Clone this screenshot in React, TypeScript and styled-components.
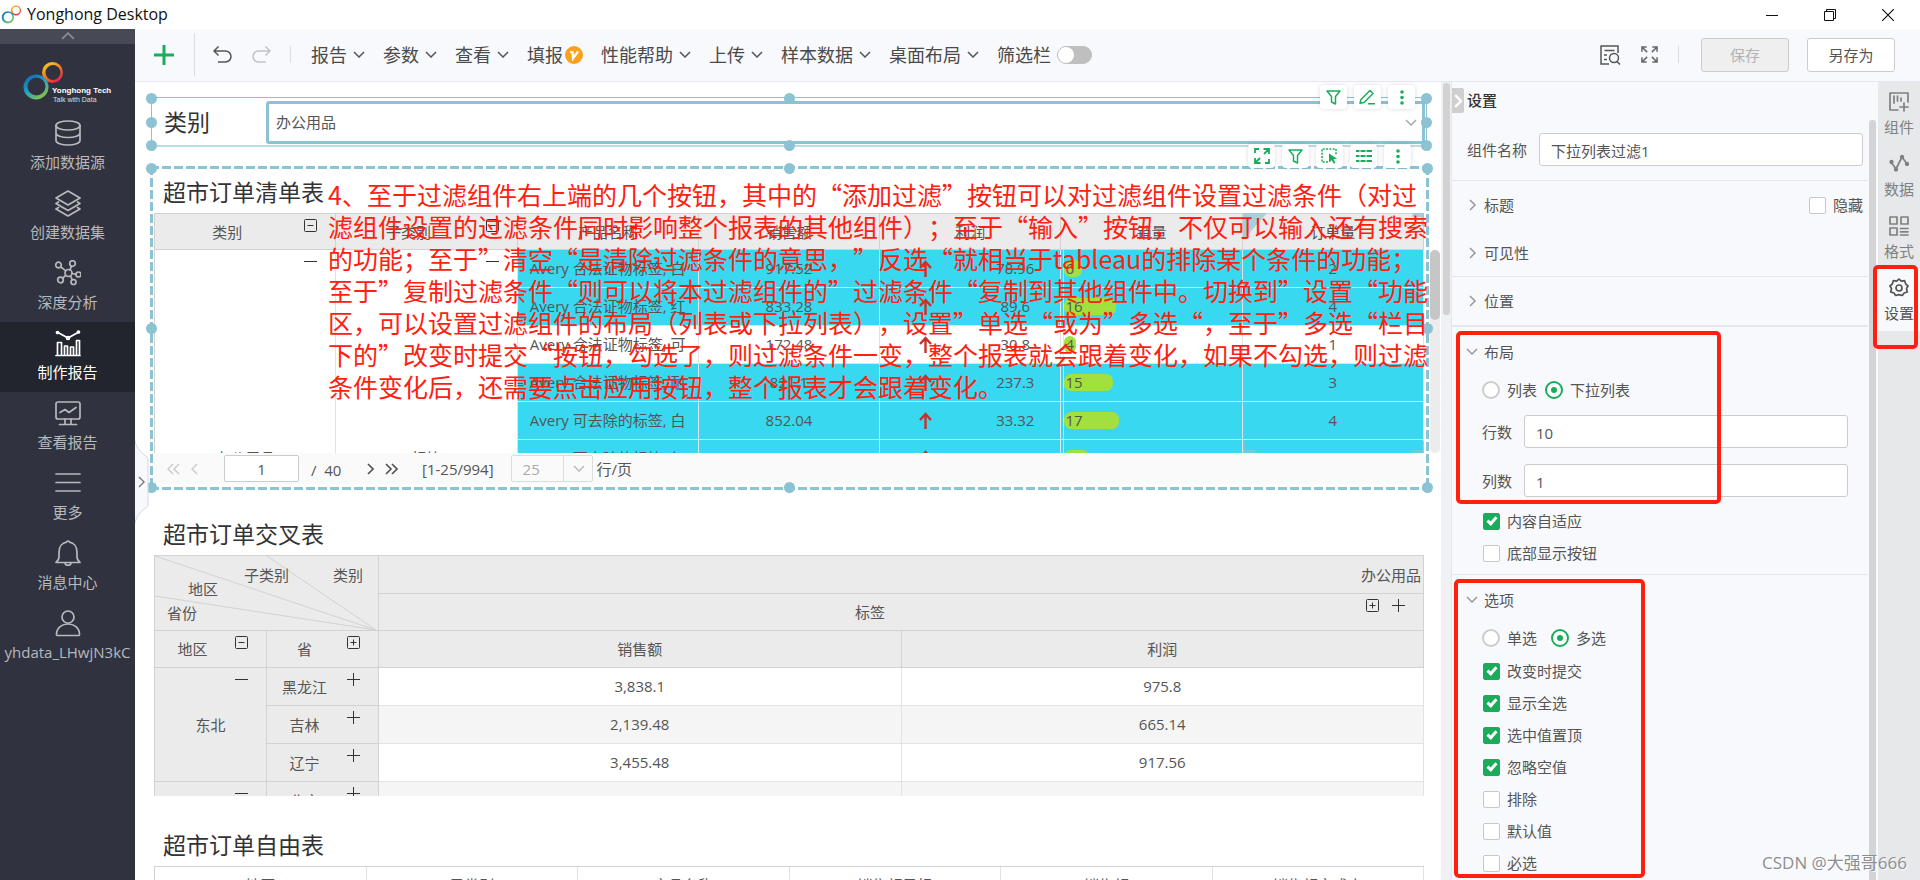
import React from "react";
import styled, { createGlobalStyle, css } from "styled-components";

const teal = "#8bc3d3";
const green = "#19ad5b";
const red = "#ff2010";

const GlobalStyle = createGlobalStyle`
  *, *::before, *::after { box-sizing: border-box; }
  body { margin: 0; }
  body, button, input, select {
    font-family: "Open Sans", "Noto Sans CJK SC", sans-serif;
    font-size: 15px;
    color: #555;
  }
  button { border: 0; background: none; padding: 0; cursor: pointer; }
`;

/* ---------- frame ---------- */

const Window = styled.div`
  display: flex;
  flex-direction: column;
  height: 100vh;
  overflow: hidden;
  background: #fff;
  position: relative;
`;

const TitleBar = styled.header`
  flex: none;
  display: flex;
  align-items: center;
  height: 29px;
  padding: 0 26px 0 1px;
  color: #111;
  h1 {
    flex: 1;
    margin: 0 0 0 5px;
    font-size: 16px;
    line-height: 29px;
    font-weight: 400;
  }
`;

const WindowButtons = styled.div`
  display: flex;
  gap: 46px;
  button { display: flex; }
`;

const Frame = styled.div`
  flex: 1;
  min-height: 0;
  display: flex;
`;

const Column = styled.div`
  flex: 1;
  min-width: 0;
  display: flex;
  flex-direction: column;
`;

const Row = styled.div`
  flex: 1;
  min-height: 0;
  display: flex;
`;

/* ---------- navigation ---------- */

const Sidebar = styled.nav`
  flex: none;
  width: 135px;
  background: #30333f;
  display: flex;
  flex-direction: column;
`;

const CollapseStrip = styled.button`
  height: 15px;
  background: #474954;
  display: flex;
  align-items: center;
  justify-content: center;
`;

const Logo = styled.div`
  height: 68px;
`;

const NavItem = styled.button<{ $active?: boolean }>`
  height: 70px;
  display: flex;
  flex-direction: column;
  align-items: center;
  padding-top: 8px;
  gap: 4px;
  line-height: 22px;
  color: ${(p) => (p.$active ? "#fff" : "#b8b9bd")};
  background: ${(p) => (p.$active ? "#22242e" : "none")};
`;

/* ---------- toolbar ---------- */

const Toolbar = styled.div`
  flex: none;
  height: 53px;
  padding: 0 25px 1px 19px;
  display: flex;
  align-items: center;
  background: #f8f9fc;
  border-bottom: 1px solid #e4e7ed;
`;

const Divider = styled.span<{ $tall?: boolean }>`
  width: 1px;
  height: ${(p) => (p.$tall ? 43 : 17)}px;
  background: #d9dce2;
`;

const History = styled.div`
  display: flex;
  gap: 20px;
  padding: 0 19px 0 18px;
  button { display: flex; }
`;

const Menus = styled.div`
  flex: 1;
  display: flex;
  align-items: center;
  gap: 18px;
  padding-left: 20px;
`;

const Menu = styled.button`
  display: flex;
  align-items: center;
  gap: 6px;
  font-size: 18px;
  line-height: 26px;
  color: #4a4a4a;
`;

const VipBadge = styled.span`
  display: flex;
  margin-left: -4px;
`;

const SwitchLabel = styled.label`
  display: flex;
  align-items: center;
  gap: 6px;
  font-size: 18px;
  line-height: 26px;
  color: #4a4a4a;
  input {
    appearance: none;
    margin: 0;
    width: 35px;
    height: 18px;
    border-radius: 9px;
    background: #bfbfbf;
    border: 1px solid #bfbfbf;
  }
  input::before {
    content: "";
    display: block;
    width: 16px;
    height: 16px;
    border-radius: 50%;
    background: #fff;
  }
`;

const ToolActions = styled.div`
  display: flex;
  align-items: center;
  gap: 20px;
  button { display: flex; }
`;

const SaveButtons = styled.div`
  display: flex;
  gap: 18px;
  margin-left: 2px;
`;

const PushButton = styled.button`
  && {
    width: 88px;
    height: 34px;
    justify-content: center;
    align-items: center;
    border: 1px solid #ccc;
    border-radius: 3px;
    background: #fff;
  }
  &&:disabled {
    background: #efefef;
    color: #b3b3b3;
  }
`;

/* ---------- canvas ---------- */

const Canvas = styled.main`
  flex: 1;
  min-width: 0;
  position: relative;
  overflow: hidden;
  padding: 15px 12px 0 15px;
`;

const Track = styled.div`
  flex: none;
  width: 10px;
  background: #f0f1f4;
  padding: 1px 1px 0 2px;
  &::before {
    content: "";
    display: block;
    height: 232px;
    border-radius: 3px;
    background: #d2d2d2;
  }
`;

const DrawerHandle = styled.button`
  position: absolute;
  left: 0;
  top: 358px;
  display: flex;
  z-index: 1;
`;

const FilterBox = styled.section`
  position: relative;
  margin: 0 2px 0 1px;
  height: 50px;
  display: flex;
  align-items: center;
  border: 1px solid ${teal};
  border-bottom: 2px solid #b9dde6;
  padding: 1px 1px 0 12px;
`;

const FilterLabel = styled.label`
  width: 102px;
  font-size: 23px;
  line-height: 42px;
  color: #333;
`;

const SelectWrap = styled.div`
  flex: 1;
  position: relative;
  display: flex;
  select {
    appearance: none;
    width: 100%;
    height: 43px;
    padding: 0 7px;
    border: 3px solid ${teal};
    border-radius: 3px;
    background: #fff;
  }
  svg {
    position: absolute;
    right: 8px;
    top: 18px;
  }
`;

const dash = (deg: number) =>
  `repeating-linear-gradient(${deg}deg, ${teal} 0 9px, transparent 9px 12px)`;

const ListBox = styled.section`
  position: relative;
  margin-top: 19px;
  padding: 5px 5px 6px 4px;
  background:
    ${dash(90)} 0 0 / 100% 3px no-repeat,
    ${dash(90)} 0 100% / 100% 3px no-repeat,
    ${dash(180)} 0 0 / 3px 100% no-repeat,
    ${dash(180)} 100% 0 / 3px 100% no-repeat;
`;

const DotFrame = styled.div<{ $inset: string }>`
  position: absolute;
  inset: ${(p) => p.$inset};
  pointer-events: none;
`;

const Dot = styled.i<{ $x: number; $y: number }>`
  position: absolute;
  left: ${(p) => p.$x}%;
  top: ${(p) => p.$y}%;
  width: 11px;
  height: 11px;
  margin: -5px;
  border-radius: 50%;
  background: ${teal};
`;

const FloatTools = styled.div<{ $right: number; $top: number }>`
  position: absolute;
  right: ${(p) => p.$right}px;
  top: ${(p) => p.$top}px;
  display: flex;
  gap: 7px;
  z-index: 2;
  button {
    width: 27px;
    height: 24px;
    display: flex;
    align-items: center;
    justify-content: center;
    border-radius: 4px;
    background: #fff;
    box-shadow: 0 0 5px rgba(0, 0, 0, 0.14);
  }
`;

const Heading = styled.h2`
  margin: 0;
  padding-left: 9px;
  font-size: 23px;
  line-height: 42px;
  font-weight: 400;
  color: #333;
`;

const Section = styled.section<{ $gap: number }>`
  margin: ${(p) => p.$gap}px 5px 0 4px;
`;

const Clip = styled.div<{ $height: number }>`
  position: relative;
  height: ${(p) => p.$height}px;
  overflow: hidden;
`;

const Grid = styled.table`
  width: 100%;
  table-layout: fixed;
  border-collapse: separate;
  border-spacing: 0;
  border-top: 1px solid #d2d2d2;
  border-left: 1px solid #d2d2d2;
  text-align: center;
`;

const Head = styled.th<{ $mark?: boolean; $marks?: boolean; $h?: number; $align?: string }>`
  position: relative;
  height: ${(p) => p.$h ?? 37}px;
  padding: 0 2px;
  font-weight: 400;
  line-height: 20px;
  background: #ebebeb;
  border-right: 1px solid #d2d2d2;
  border-bottom: 1px solid #d2d2d2;
  text-align: ${(p) => p.$align ?? "center"};
  ${(p) => p.$mark && css`padding-right: 38px;`}
  ${(p) => p.$marks && css`padding-right: 64px;`}
`;

const Cell = styled.td<{ $bg?: string; $low?: boolean }>`
  position: relative;
  height: 38px;
  padding: 0;
  line-height: 37px;
  white-space: nowrap;
  background: ${(p) => p.$bg ?? "#fff"};
  border-right: 1px solid #e2e2e2;
  border-bottom: 1px solid #e2e2e2;
  vertical-align: ${(p) => (p.$low ? "bottom" : "middle")};
`;

const Mark = styled.button<{ $right?: number }>`
  position: absolute;
  top: 5px;
  right: ${(p) => p.$right ?? 18}px;
  display: flex;
`;

const Halves = styled.div`
  display: grid;
  grid-template-columns: 1fr 1fr;
  place-items: center;
`;

const Bar = styled.div`
  display: flex;
  align-items: center;
  height: 17px;
  padding-left: 1px;
  border-radius: 7px;
  background: #a2e03f;
`;

const BarCell = styled.div`
  border-left: 1px solid #cfeff4;
  height: 37px;
  display: flex;
  align-items: center;
  margin-left: 2px;
`;

const Selection = styled.div`
  position: absolute;
  top: 0;
  right: 0;
  width: calc(100% / 7);
  height: 100%;
  display: flex;
  pointer-events: none;
  svg { width: 100%; height: 100%; overflow: visible; }
`;

const InnerScroll = styled.div`
  position: absolute;
  right: -11px;
  top: 84px;
  width: 10px;
  height: 203px;
  border-radius: 5px;
  background: #ececec;
  &::before {
    content: "";
    display: block;
    height: 70px;
    border-radius: 5px;
    background: #c6c6c6;
  }
`;

const Pager = styled.div`
  height: 31px;
  display: flex;
  align-items: center;
  padding: 0 13px;
  background: #fafafa;
  > button { display: flex; }
  > input {
    width: 75px;
    height: 27px;
    margin: 0 12px 0 26px;
    border: 1px solid #ccc;
    border-radius: 2px;
    text-align: center;
  }
  > button + button { margin-left: 11px; }
`;

const PageCount = styled.span`
  width: 56px;
  line-height: 20px;
  padding-top: 3px;
`;

const PageRange = styled.span`
  margin: 0 17px 0 24px;
`;

const PageSize = styled.div`
  position: relative;
  display: flex;
  margin-right: 4px;
  select {
    appearance: none;
    width: 82px;
    height: 27px;
    padding: 0 11px;
    border: 1px solid #ddd;
    border-radius: 2px;
    background: linear-gradient(#ddd, #ddd) 51px 0 / 1px 100% no-repeat #fafafa;
    color: #aaa;
    opacity: 1;
  }
  svg {
    position: absolute;
    right: 8px;
    top: 10px;
  }
`;

const Note = styled.p`
  position: absolute;
  left: 178px;
  top: 12px;
  margin: 0;
  font-family: "Noto Sans CJK SC", sans-serif;
  font-size: 25px;
  line-height: 32px;
  white-space: pre;
  text-spacing-trim: space-all;
  color: ${red};
  z-index: 1;
`;

const Corner = styled.th`
  position: relative;
  padding: 0;
  font-weight: 400;
  background: #ebebeb;
  border-right: 1px solid #d2d2d2;
  border-bottom: 1px solid #d2d2d2;
  svg {
    position: absolute;
    inset: 0;
    width: 100%;
    height: 100%;
  }
`;

const CornerLabel = styled.span<{ $x: number; $y: number }>`
  position: absolute;
  left: ${(p) => p.$x}px;
  top: ${(p) => p.$y}px;
  line-height: 20px;
`;

/* ---------- settings panel ---------- */

const Panel = styled.aside`
  flex: none;
  width: 417px;
  position: relative;
  background: #f8f9fc;
  border-left: 1px solid #e4e7ed;
  overflow: hidden;
`;

const PanelToggle = styled.button`
  position: absolute;
  left: 0;
  top: 6px;
  width: 12px;
  height: 25px;
  display: flex;
  align-items: center;
  justify-content: center;
  border-radius: 0 2px 2px 0;
  background: #cfcfcf;
`;

const PanelTitle = styled.h2`
  margin: 0;
  padding: 8px 0 0 15px;
  font-size: 15px;
  line-height: 20px;
  font-weight: 500;
  color: #333;
`;

const Field = styled.label<{ $inset?: boolean }>`
  display: flex;
  align-items: center;
  gap: 12px;
  padding: ${(p) => (p.$inset ? "0 20px 0 30px" : "0 5px 0 15px")};
  height: 33px;
  line-height: 20px;
  input {
    flex: 1;
    min-width: 0;
    height: 33px;
    padding: 2px 11px 0;
    border: 1px solid #ccc;
    border-radius: 3px;
    background: #fff;
  }
`;

const NameField = styled.div`
  padding: 23px 0 14px;
  border-bottom: 1px solid #e4e7ed;
`;

const Fold = styled.div<{ $line?: number }>`
  height: ${(p) => (p.$line === 2 ? 50 : 48)}px;
  display: flex;
  align-items: center;
  justify-content: space-between;
  padding: 0 5px 0 16px;
  border-bottom: ${(p) => p.$line ?? 0}px solid #e4e7ed;
  > button {
    display: flex;
    align-items: center;
    gap: 7px;
    line-height: 22px;
  }
  > button svg { width: 9px; }
`;

const Group = styled.section<{ $last?: boolean }>`
  position: relative;
  padding-bottom: ${(p) => (p.$last ? 0 : 11)}px;
  border-bottom: ${(p) => (p.$last ? 0 : 1)}px solid #e4e7ed;
`;

const GroupTitle = styled.button`
  display: flex;
  align-items: center;
  gap: 6px;
  height: 48px;
  padding-left: 14px;
`;

const Radios = styled.div<{ $gap: number }>`
  display: flex;
  align-items: center;
  gap: ${(p) => p.$gap}px;
  height: 30px;
  padding-left: 30px;
`;

const Choice = styled.label`
  display: flex;
  align-items: center;
  gap: 7px;
  line-height: 20px;
  input {
    appearance: none;
    margin: 0;
    width: 17px;
    height: 17px;
    position: relative;
    border: 1px solid #c8c8c8;
    border-radius: 2px;
    background: #fff;
  }
  input[type="radio"] {
    width: 18px;
    height: 18px;
    border-width: 2px;
    border-color: #ccc;
    border-radius: 50%;
  }
  input[type="radio"]:checked { border-color: ${green}; }
  input[type="radio"]:checked::after {
    content: "";
    position: absolute;
    inset: 4px;
    border-radius: 50%;
    background: ${green};
  }
  input[type="checkbox"]:checked {
    background: ${green};
    border-color: ${green};
  }
  input[type="checkbox"]:checked::after {
    content: "";
    position: absolute;
    left: 5px;
    top: 1px;
    width: 6px;
    height: 10px;
    border: solid #fff;
    border-width: 0 3px 3px 0;
    transform: rotate(42deg);
  }
`;

const Checks = styled.div<{ $top?: number }>`
  display: flex;
  flex-direction: column;
  gap: 12px;
  padding: ${(p) => p.$top ?? 0}px 0 0 31px;
`;

const Fields = styled.div`
  display: flex;
  flex-direction: column;
  gap: 16px;
  padding: 10px 0 14px;
`;

const RedBox = styled.div<{ $box: [number, number, number, number] }>`
  position: absolute;
  left: ${(p) => p.$box[0]}px;
  top: ${(p) => p.$box[1]}px;
  width: ${(p) => p.$box[2]}px;
  height: ${(p) => p.$box[3]}px;
  border: 4px solid ${red};
  border-radius: 5px;
  pointer-events: none;
  z-index: 3;
`;

const PanelScroll = styled.div`
  flex: none;
  width: 10px;
  background: #f8f9fc;
  padding: 38px 2px 0 1px;
  display: flex;
  &::before {
    content: "";
    flex: 1;
    border-radius: 3px 3px 0 0;
    background: #d4d4d4;
  }
`;

const Rail = styled.nav`
  flex: none;
  width: 42px;
  position: relative;
  padding-top: 1px;
  background: #e7e8ea;
`;

const RailItem = styled.button<{ $active?: boolean }>`
  width: 42px;
  height: 62px;
  display: flex;
  flex-direction: column;
  align-items: center;
  justify-content: flex-end;
  padding-bottom: 8px;
  gap: 5px;
  line-height: 20px;
  color: ${(p) => (p.$active ? "#555" : "#808080")};
  background: ${(p) => (p.$active ? "#f8f9fc" : "none")};
`;

const Watermark = styled.div`
  position: absolute;
  right: 13px;
  bottom: 4px;
  font-family: "Open Sans", "Noto Sans CJK SC", sans-serif;
  font-size: 17px;
  line-height: 26px;
  color: #8d8e90;
  text-shadow: 1px 1px 1px #fff;
  z-index: 4;
`;

/* ---------- icons ---------- */

type Dir = "down" | "up" | "left" | "right";
const turns: Record<Dir, string> = {
  down: "M1 1l5 5 5-5",
  up: "M1 6l5-5 5 5",
  left: "M6 1L1 6l5 5",
  right: "M1 1l5 5-5 5",
};

function Chevron({ dir = "down", size = 12, color = "#555", w = 1.5, twice = false }: {
  dir?: Dir; size?: number; color?: string; w?: number; twice?: boolean;
}) {
  const flat = dir === "down" || dir === "up";
  const across = twice ? 13 : 7;
  const k = size / 12;
  return (
    <svg width={(flat ? 12 : across) * k} height={(flat ? 7 : 12) * k}
      viewBox={flat ? "0 0 12 7" : `0 0 ${across} 12`} fill="none" stroke={color} strokeWidth={w}>
      <path d={turns[dir]} />
      {twice && <path d={turns[dir]} transform="translate(6 0)" />}
    </svg>
  );
}

function RingShapes({ id }: { id: string }) {
  return (
    <>
      <defs>
        <linearGradient id={`${id}a`} x1="0.2" y1="0" x2="0.8" y2="1">
          <stop offset="0" stopColor="#f6d21c" />
          <stop offset="0.45" stopColor="#f58220" />
          <stop offset="1" stopColor="#e5124f" />
        </linearGradient>
        <linearGradient id={`${id}b`} x1="0.1" y1="0.1" x2="0.7" y2="1">
          <stop offset="0" stopColor="#1767b0" />
          <stop offset="0.45" stopColor="#1c9fc9" />
          <stop offset="1" stopColor="#8cc63f" />
        </linearGradient>
      </defs>
      <path fillRule="evenodd" fill={`url(#${id}a)`}
        d="M52.500 18a10.500 10.500 0 1 1 0 21a10.500 10.500 0 1 1 0-21zM53 21a7.500 7.500 0 1 0 0 15a7.500 7.500 0 1 0 0-15z" />
      <path fillRule="evenodd" fill={`url(#${id}b)`}
        d="M36 30.500a12.500 12.500 0 1 1 0 25a12.500 12.500 0 1 1 0-25zM36.500 33.500a9 9 0 1 0 0 18a9 9 0 1 0 0-18z" />
    </>
  );
}

const line = { fill: "none", stroke: "currentColor", strokeWidth: 1.7, strokeLinejoin: "round", strokeLinecap: "round" } as const;

const navIcons: Record<string, React.ReactNode> = {
  db: (<><ellipse cx="13" cy="5.500" rx="12" ry="4.500" /><path d="M1 5.500v15c0 2.500 5.400 4.500 12 4.500s12-2 12-4.500v-15M1 13c0 2.500 5.400 4.500 12 4.500S25 15.500 25 13" /></>),
  layers: (<><path d="M13 1l12 7-12 7L1 8z" /><path d="M3.500 12L1 13.500l12 7 12-7-2.500-1.500M3.500 17.500L1 19l12 7 12-7-2.500-1.500" /></>),
  net: (<><circle cx="13.500" cy="13" r="3.500" /><circle cx="3.500" cy="5" r="2.800" /><circle cx="17.500" cy="3.500" r="2.800" /><circle cx="23.500" cy="14.500" r="2.500" /><circle cx="18.500" cy="22" r="2.500" /><circle cx="5.500" cy="20" r="2.800" /><path d="M5.800 6.800l5 4M16.500 6.200l-1.500 3.600M17 13.500l4 .6M15.500 16l1.800 3.800M10.800 15.400l-3.200 2.800" /></>),
  chart: (<><path d="M3 2.500l10 5.500 10-5.500" /><circle cx="2.500" cy="2.500" r="1" /><circle cx="13" cy="8" r="1.500" /><circle cx="23.500" cy="2" r="1" /><path d="M1 25.500h24M2.500 25V12.500h4V25M9.500 25v-9h3v9M15.500 25v-8h3v8M21.500 25V10.500h3V25" /></>),
  monitor: (<><rect x="1" y="2" width="24" height="17" rx="2" /><path d="M5 12.500l5-3 4 3 7-5M10 19v5M16 19v5M4.500 24.500h17" /></>),
  menu: (<path d="M1 4h24M1 12.500h24M1 21h24" />),
  bell: (<><path d="M1 22.500h24c-2-1.500-3-3-3-6V12c0-5-3-9-7.500-9.800C14.300.600 11.700.600 11.500 2.200 7 3 4 7 4 12v4.500c0 3-1 4.500-3 6z" /><path d="M10 23c.5 3 5.500 3 6 0" /></>),
  user: (<><circle cx="13" cy="7" r="6" /><path d="M1.500 24.500c0-14 23-14 23 0 0 .5-.5 1-1 1h-21c-.5 0-1-.5-1-1z" /></>),
};

const nav = [
  ["db", "添加数据源"], ["layers", "创建数据集"], ["net", "深度分析"], ["chart", "制作报告"],
  ["monitor", "查看报告"], ["menu", "更多"], ["bell", "消息中心"], ["user", "yhdata_LHwjN3kC"],
];

const tools: Record<string, React.ReactNode> = {
  expand: (
    <svg width="16" height="16" viewBox="0 0 16 16" fill="none" stroke={green} strokeWidth="1.800">
      <path d="M1 5V1h4M9.500 1H15v5M15 11v4h-4M6.500 15H1v-5M15 1l-5 5M1 15l5-5" />
    </svg>
  ),
  filter: (
    <svg width="15" height="15" viewBox="0 0 15 15" fill="none" stroke={green} strokeWidth="1.500" strokeLinejoin="round">
      <path d="M1 1h13L9.500 6.500v7.500l-4-2V6.500z" />
    </svg>
  ),
  select: (
    <svg width="17" height="16" viewBox="0 0 17 16" fill="none" stroke={green} strokeWidth="1.500">
      <path d="M7 14H1V1h14v6" strokeDasharray="2 1.300" />
      <path d="M8 5.500l8 5-3.500.8 2 3.500-1.700.9-2-3.500L8 14.500z" fill={green} stroke="none" />
    </svg>
  ),
  list: (
    <svg width="16" height="14" viewBox="0 0 16 14" stroke={green} strokeWidth="2.200">
      <path d="M0 2h3.500M4.500 2h5M10.500 2H16M0 7h3.500M4.500 7h5M10.500 7H16M0 12h3.500M4.500 12h5M10.500 12H16" />
    </svg>
  ),
  pen: (
    <svg width="17" height="16" viewBox="0 0 17 16" fill="none" stroke={green} strokeWidth="1.500" strokeLinejoin="round">
      <path d="M2 10.500L11 1.500l3 3-9 9-4 .8zM9 14.800h7" />
    </svg>
  ),
  more: (
    <svg width="4" height="15" viewBox="0 0 4 15" fill={green}>
      <circle cx="2" cy="2" r="1.800" /><circle cx="2" cy="7.500" r="1.800" /><circle cx="2" cy="13" r="1.800" />
    </svg>
  ),
};

const railIcons: Record<string, React.ReactNode> = {
  widget: (<><path d="M19 10V1H1v17h8" /><path d="M5 4v7M8.500 4v5M12 6v3M15 11v8M11 15h8" /></>),
  data: (<><path d="M2 8l5 7 6-12 5 7" /><circle cx="2.500" cy="8" r="1.300" fill="currentColor" /><circle cx="7" cy="15.500" r="1.300" fill="currentColor" /><circle cx="13" cy="3" r="1.300" fill="currentColor" /><circle cx="18" cy="10" r="1.300" fill="currentColor" /></>),
  format: (<path d="M1 1h7v7H1zM12 1h7v7h-7zM1 12h7v7H1zM11.500 12.500H19M11.500 15.800H19M11.500 19H19" />),
  gear: (<><circle cx="10" cy="10" r="3" /><path d="M10 1l2.300 2.200 3.300-.6 1 3.200 2.400 2.200-1.500 2.700.8 3.300-3.200 1-1.800 2.500L10 16.600 6.700 17.500l-1.800-2.500-3.200-1 .8-3.300L1 8l2.400-2.200 1-3.200 3.300.6z" /></>),
};

function Box({ kind, boxed }: { kind: "plus" | "minus"; boxed?: boolean }) {
  return (
    <svg width="13" height="13" viewBox="0 0 13 13" fill="none" stroke="#333">
      {boxed && <rect x=".5" y=".5" width="12" height="12" rx="1" />}
      <path d={boxed ? "M3.500 6.500h6" : "M0 6.500h13"} />
      {kind === "plus" && <path d={boxed ? "M6.500 3.500v6" : "M6.500 0v13"} />}
    </svg>
  );
}

/* ---------- data ---------- */

const cyan = "#38d9f0";
const orders = [
  { name: "Avery 合法证物标签, 白", sales: "917.52", profit: "78.96", qty: 6, bar: 18, count: 2, hot: true },
  { name: "Avery 合法证物标签, 红", sales: "833.28", profit: "89.6", qty: 16, bar: 52, count: 4, hot: true },
  { name: "Avery 合法证物标签, 可", sales: "172.48", profit: "30.8", qty: 4, bar: 12, count: 1, hot: false },
  { name: "Avery 合法证物标签, 耐", sales: "821.1", profit: "237.3", qty: 15, bar: 49, count: 3, hot: true },
  { name: "Avery 可去除的标签, 白", sales: "852.04", profit: "33.32", qty: 17, bar: 55, count: 4, hot: true },
  { name: "Avery 可去除的标签, 红", sales: "", profit: "", qty: 8, bar: 25, count: "", hot: true },
];

const regions = [
  ["黑龙江", "3,838.1", "975.8"],
  ["吉林", "2,139.48", "665.14"],
  ["辽宁", "3,455.48", "917.56"],
];

const noteLines = [
  "4、至于过滤组件右上端的几个按钮，其中的“添加过滤”按钮可以对过滤组件设置过滤条件（对过",
  "滤组件设置的过滤条件同时影响整个报表的其他组件）；至于“输入”按钮，不仅可以输入还有搜索",
  "的功能；至于”清空“是清除过滤条件的意思，”反选“就相当于tableau的排除某个条件的功能；",
  "至于”复制过滤条件“则可以将本过滤组件的”过滤条件“复制到其他组件中。切换到”设置“功能",
  "区，可以设置过滤组件的布局（列表或下拉列表），设置”单选“或为”多选“，至于”多选“栏目",
  "下的”改变时提交“按钮，勾选了，则过滤条件一变，整个报表就会跟着变化，如果不勾选，则过滤",
  "条件变化后，还需要点击应用按钮，整个报表才会跟着变化。",
];

const options: [string, boolean][] = [
  ["改变时提交", true], ["显示全选", true], ["选中值置顶", true], ["忽略空值", true],
  ["排除", false], ["默认值", false], ["必选", false],
];

function Dots({ inset }: { inset: string }) {
  return (
    <DotFrame $inset={inset}>
      {[0, 50, 100].flatMap((x) =>
        [0, 50, 100].filter((y) => !(x === 50 && y === 50)).map((y) => <Dot key={`${x}-${y}`} $x={x} $y={y} />)
      )}
    </DotFrame>
  );
}

function Tools({ names, right, top }: { names: string[]; right: number; top: number }) {
  return (
    <FloatTools $right={right} $top={top}>
      {names.map((n) => <button key={n} aria-label={n}>{tools[n]}</button>)}
    </FloatTools>
  );
}

function OrderList() {
  return (
    <ListBox>
      <Heading>超市订单清单表</Heading>
      <Clip $height={240}>
        <Grid>
          <thead>
            <tr>
              {["类别", "子类别", "产品名称", "销售额", "利润", "销量", "订单量"].map((h, i) => (
                <Head key={h} $h={36} $mark={i < 2}>
                  {h}
                  {i < 2 && <Mark aria-label="收起"><Box kind="minus" boxed /></Mark>}
                </Head>
              ))}
            </tr>
          </thead>
          <tbody>
            {orders.map((o, i) => {
              const bg = o.hot ? cyan : "#fff";
              return (
                <tr key={o.name}>
                  {i === 0 && ["办公用品", "标签"].map((t) => (
                    <Cell key={t} rowSpan={6} $low>
                      {t}
                      <Mark aria-label="收起"><Box kind="minus" /></Mark>
                    </Cell>
                  ))}
                  <Cell $bg={bg}>{o.name}</Cell>
                  <Cell $bg={bg}>{o.sales}</Cell>
                  <Cell $bg={bg}>
                    <Halves>
                      <svg width="13" height="17" viewBox="0 0 13 17" fill="none" stroke="#c8312b" strokeWidth="2.400">
                        <path d="M6.500 17V2M1 8l5.500-6L12 8" />
                      </svg>
                      <span>{o.profit}</span>
                    </Halves>
                  </Cell>
                  <Cell $bg={bg}>
                    <BarCell><Bar style={{ width: o.bar }}>{o.qty}</Bar></BarCell>
                  </Cell>
                  <Cell $bg={bg}>{o.count}</Cell>
                </tr>
              );
            })}
          </tbody>
        </Grid>
        <Selection>
          <svg fill={teal} opacity=".7">
            <path d="M0 0h24L0 27z" />
            <svg x="100%"><path d="M-12 0H0v13h-3V4h-9z" /></svg>
            <svg y="100%"><path d="M0-12h2v9h10v3H0z" /></svg>
            <svg x="100%" y="100%"><path d="M-12-3h10v-9h2V0h-12z" /></svg>
          </svg>
        </Selection>
      </Clip>
      <Pager>
        <button aria-label="首页"><Chevron dir="left" twice color="#ccc" /></button>
        <button aria-label="上一页"><Chevron dir="left" color="#ccc" /></button>
        <input aria-label="页码" defaultValue="1" />
        <PageCount>/&nbsp; 40</PageCount>
        <button aria-label="下一页"><Chevron dir="right" w={1.7} /></button>
        <button aria-label="末页"><Chevron dir="right" twice w={1.7} /></button>
        <PageRange>[1-25/994]</PageRange>
        <PageSize>
          <select aria-label="每页行数" disabled><option>25</option></select>
          <Chevron color="#bbb" />
        </PageSize>
        行/页
      </Pager>
      <InnerScroll />
      <Dots inset="2px 2px 3px 1px" />
      <Tools names={["expand", "filter", "select", "list", "more"]} right={18} top={-22} />
      <Note lang="zh-CN">{noteLines.join("\n")}</Note>
    </ListBox>
  );
}

function CrossTable() {
  return (
    <Section $gap={23}>
      <Heading>超市订单交叉表</Heading>
      <Clip $height={241}>
        <Grid>
          <colgroup>
            <col style={{ width: 112 }} />
            <col style={{ width: 112 }} />
            <col />
            <col />
          </colgroup>
          <tbody>
            <tr>
              <Corner colSpan={2} rowSpan={2}>
                <svg viewBox="0 0 223 74" preserveAspectRatio="none" stroke="#d2d2d2" fill="none">
                  <path d="M0 0l221 74L112 0M0 40l221 34" />
                </svg>
                <CornerLabel $x={178} $y={9}>类别</CornerLabel>
                <CornerLabel $x={89} $y={9}>子类别</CornerLabel>
                <CornerLabel $x={33} $y={23}>地区</CornerLabel>
                <CornerLabel $x={12} $y={47}>省份</CornerLabel>
              </Corner>
              <Head colSpan={2} $h={38} $align="right">办公用品</Head>
            </tr>
            <tr>
              <Head colSpan={2} $marks>
                标签
                <Mark $right={44} aria-label="展开"><Box kind="plus" boxed /></Mark>
                <Mark aria-label="展开"><Box kind="plus" /></Mark>
              </Head>
            </tr>
            <tr>
              <Head $mark>地区<Mark aria-label="收起"><Box kind="minus" boxed /></Mark></Head>
              <Head $mark>省<Mark aria-label="展开"><Box kind="plus" boxed /></Mark></Head>
              <Head>销售额</Head>
              <Head>利润</Head>
            </tr>
            {regions.map(([name, sales, profit], i) => (
              <tr key={name}>
                {i === 0 && <Head rowSpan={3}>东北<Mark aria-label="收起"><Box kind="minus" /></Mark></Head>}
                <Head $h={38} $mark>{name}<Mark aria-label="展开"><Box kind="plus" /></Mark></Head>
                <Cell $bg={i % 2 ? "#f5f5f5" : "#fff"}>{sales}</Cell>
                <Cell $bg={i % 2 ? "#f5f5f5" : "#fff"}>{profit}</Cell>
              </tr>
            ))}
            <tr>
              <Head $h={38}><Mark aria-label="收起"><Box kind="minus" /></Mark></Head>
              <Head $mark>北京<Mark aria-label="展开"><Box kind="plus" /></Mark></Head>
              <Cell $bg="#f5f5f5">4,388.28</Cell>
              <Cell $bg="#f5f5f5">273.24</Cell>
            </tr>
          </tbody>
        </Grid>
      </Clip>
    </Section>
  );
}

function FreeTable() {
  return (
    <Section $gap={28}>
      <Heading>超市订单自由表</Heading>
      <Grid>
        <tbody>
          <tr>
            {["地区", "子类别", "产品名称", "销售额目标", "销售额", "销售额完成率"].map((h) => <Cell key={h}>{h}</Cell>)}
          </tr>
        </tbody>
      </Grid>
    </Section>
  );
}

function Check({ label, on }: { label: string; on?: boolean }) {
  return <Choice><input type="checkbox" defaultChecked={on} />{label}</Choice>;
}

function Settings() {
  return (
    <Panel>
      <PanelToggle aria-label="收起面板"><Chevron dir="right" color="#fff" w={2} size={14} /></PanelToggle>
      <PanelTitle>设置</PanelTitle>
      <NameField>
        <Field>组件名称<input defaultValue="下拉列表过滤1" /></Field>
      </NameField>
      <Fold>
        <button><Chevron dir="right" color="#999" />标题</button>
        <Check label="隐藏" />
      </Fold>
      <Fold $line={1}><button><Chevron dir="right" color="#999" />可见性</button></Fold>
      <Fold $line={2}><button><Chevron dir="right" color="#999" />位置</button></Fold>
      <Group>
        <GroupTitle><Chevron color="#999" />布局</GroupTitle>
        <Radios $gap={8}>
          <Choice><input type="radio" name="layout" />列表</Choice>
          <Choice><input type="radio" name="layout" defaultChecked />下拉列表</Choice>
        </Radios>
        <Fields>
          <Field $inset>行数<input defaultValue="10" /></Field>
          <Field $inset>列数<input defaultValue="1" /></Field>
        </Fields>
        <Checks>
          <Check label="内容自适应" on />
          <Check label="底部显示按钮" />
        </Checks>
        <RedBox $box={[4, 4, 265, 173]} />
      </Group>
      <Group $last>
        <GroupTitle><Chevron color="#999" />选项</GroupTitle>
        <Radios $gap={14}>
          <Choice><input type="radio" name="mode" />单选</Choice>
          <Choice><input type="radio" name="mode" defaultChecked />多选</Choice>
        </Radios>
        <Checks $top={8}>
          {options.map(([label, on]) => <Check key={label} label={label} on={on} />)}
        </Checks>
        <RedBox $box={[2, 4, 191, 299]} />
      </Group>
    </Panel>
  );
}

const menus = ["报告", "参数", "查看", "填报", "性能帮助", "上传", "样本数据", "桌面布局"];

export default function App() {
  return (
    <Window>
      <GlobalStyle />
      <TitleBar>
        <svg width="21" height="21" viewBox="22 16 43 42" fill="none"><RingShapes id="t" /></svg>
        <h1>Yonghong Desktop</h1>
        <WindowButtons>
          <button aria-label="最小化"><svg width="12" height="12" stroke="#111"><path d="M0 6.500h12" /></svg></button>
          <button aria-label="还原"><svg width="12" height="12" fill="none" stroke="#111"><path d="M.5 2.500h9v9h-9zM2.500 2.500v-2h9v9h-2" /></svg></button>
          <button aria-label="关闭"><svg width="12" height="12" stroke="#111" strokeWidth="1.200"><path d="M0 0l12 12M12 0L0 12" /></svg></button>
        </WindowButtons>
      </TitleBar>
      <Frame>
        <Sidebar>
          <CollapseStrip aria-label="收起导航"><Chevron dir="up" size={14} color="#8a8b93" /></CollapseStrip>
          <Logo>
            <svg width="135" height="68" viewBox="0 0 135 68" fill="none">
              <RingShapes id="l" />
              <text x="52" y="49" fill="#fff" fontFamily="Liberation Sans, sans-serif" fontSize="8" fontWeight="700">Yonghong Tech</text>
              <text x="53" y="58" fill="#ddd" fontFamily="Liberation Sans, sans-serif" fontSize="7">Talk with Data</text>
            </svg>
          </Logo>
          {nav.map(([icon, label]) => (
            <NavItem key={icon} $active={icon === "chart"}>
              <svg width="26" height="27" viewBox="0 0 26 27" {...line}>{navIcons[icon]}</svg>
              {label}
            </NavItem>
          ))}
        </Sidebar>
        <Column>
          <Toolbar>
            <ToolActions>
              <button aria-label="新建"><svg width="20" height="20" stroke={green} strokeWidth="3"><path d="M0 10h20M10 0v20" /></svg></button>
              <Divider $tall />
            </ToolActions>
            <History>
              <button aria-label="撤销">
                <svg width="19" height="17" fill="none" stroke="#555" strokeWidth="1.500"><path d="M5.500.500L1 5l4.500 4.500M1 5h11.500a5.500 5.500 0 0 1 0 11H5" /></svg>
              </button>
              <button aria-label="重做">
                <svg width="19" height="17" fill="none" stroke="#c3c3c3" strokeWidth="1.500"><path d="M13.500.500L18 5l-4.500 4.500M18 5H6.500a5.500 5.500 0 0 0 0 11H14" /></svg>
              </button>
            </History>
            <Divider />
            <Menus>
              {menus.map((m) => (
                <Menu key={m}>
                  {m}
                  {m === "填报" ? (
                    <VipBadge>
                      <svg width="18" height="18"><circle cx="9" cy="9" r="9" fill="#fba11b" /><path d="M5 6l2.500.2.500 6.300L13 5.500" fill="none" stroke="#fff" strokeWidth="2.200" /></svg>
                    </VipBadge>
                  ) : <Chevron />}
                </Menu>
              ))}
              <SwitchLabel>筛选栏<input type="checkbox" role="switch" /></SwitchLabel>
            </Menus>
            <ToolActions>
              <button aria-label="预览">
                <svg width="21" height="20" fill="none" stroke="#555" strokeWidth="1.500"><path d="M18 8V1H1v18h8M4.500 5.500h10M4 10h3M4 14.500h3" /><circle cx="14" cy="13" r="4.500" /><path d="M17 16.500l3 3" /></svg>
              </button>
              <button aria-label="全屏">
                <svg width="17" height="17" viewBox="0 0 18 18" fill="none" stroke="#666" strokeWidth="1.600">
                  <path d="M1 6V1h5M12 1h5v5M17 12v5h-5M6 17H1v-5M1 1l5.500 5.500M17 1l-5.500 5.500M17 17l-5.500-5.500M1 17l5.500-5.500" />
                </svg>
              </button>
              <Divider />
              <SaveButtons>
                <PushButton disabled>保存</PushButton>
                <PushButton>另存为</PushButton>
              </SaveButtons>
            </ToolActions>
          </Toolbar>
          <Row>
            <Canvas>
              <DrawerHandle aria-label="展开抽屉">
                <svg width="14" height="84" fill="#f8f9fc" stroke="#d3d7df">
                  <path d="M0 .5C1 9 8 14 12 17q1 1 1 3v44q0 2-1 3C8 70 1 75 0 83.500" />
                  <path d="M4 37l5 5-5 5" fill="none" stroke="#777" strokeWidth="1.400" />
                </svg>
              </DrawerHandle>
              <FilterBox>
                <FilterLabel htmlFor="category">类别</FilterLabel>
                <SelectWrap>
                  <select id="category"><option>办公用品</option></select>
                  <Chevron color="#aaa" />
                </SelectWrap>
                <Dots inset="0 0 0 -1px" />
                <Tools names={["filter", "pen", "more"]} right={11} top={-13} />
              </FilterBox>
              <OrderList />
              <CrossTable />
              <FreeTable />
            </Canvas>
            <Track />
            <Settings />
            <PanelScroll />
            <Rail>
              {[["widget", "组件"], ["data", "数据"], ["format", "格式"], ["gear", "设置"]].map(([icon, label]) => (
                <RailItem key={icon} $active={icon === "gear"}>
                  <svg width="20" height="20" viewBox="0 0 20 20" {...line}>{railIcons[icon]}</svg>
                  {label}
                </RailItem>
              ))}
              <RedBox $box={[-5, 183, 45, 84]} />
            </Rail>
          </Row>
        </Column>
      </Frame>
      <Watermark>CSDN @大强哥666</Watermark>
    </Window>
  );
}
